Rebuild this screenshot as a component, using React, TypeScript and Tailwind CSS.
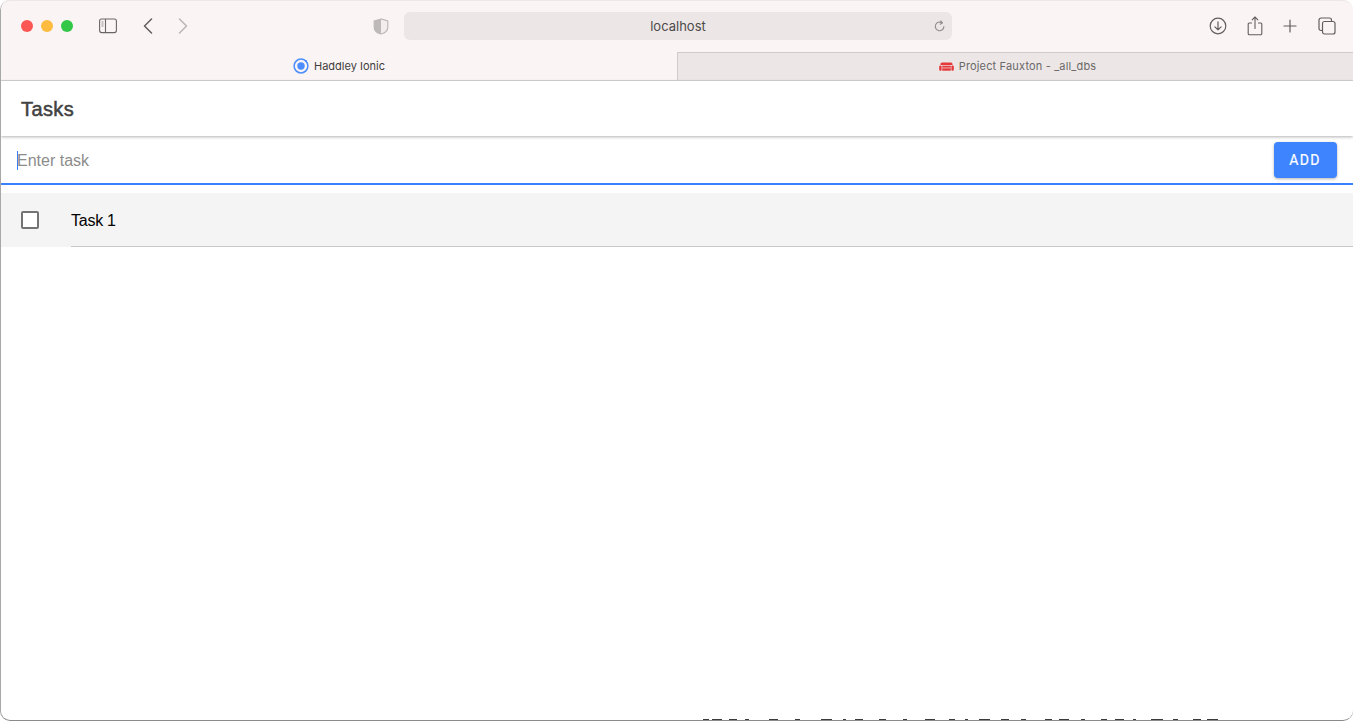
import React from 'react'

const SidebarIcon = () => (
  <svg width="18" height="16" viewBox="0 0 18 16" fill="none" className="text-[#6a6666]">
    <rect x="0.6" y="1" width="16.8" height="13.6" rx="2" stroke="currentColor" strokeWidth="1.1" />
    <path d="M6.5 1v13.6" stroke="currentColor" strokeWidth="1.1" />
    <path d="M2.5 4h2M2.5 6h2M2.500 8h2" stroke="currentColor" strokeWidth="1" opacity="0.7" />
  </svg>
)

const Chevron = ({ dir, color }: { dir: 'left' | 'right'; color: string }) => (
  <svg width="10" height="16" viewBox="0 0 10 16" fill="none" style={{ color }}>
    <path d={dir === 'left' ? 'M8.5 1 1.5 8l7 7' : 'M1.5 1l7 7-7 7'} stroke="currentColor" strokeWidth="1.5" strokeLinecap="round" strokeLinejoin="round" />
  </svg>
)

const Shield = () => (
  <svg width="16" height="17" viewBox="0 0 16 17" fill="none">
    <path d="M8 1 1.2 3v6c0 3.5 3 6 6.8 7 3.800-1 6.800-3.500 6.800-7V3L8 1z" fill="#f3eeed" stroke="#bdb9b9" strokeWidth="1.2" />
    <path d="M8 1 1.200 3v6c0 3.500 3 6 6.800 7V1z" fill="#bdb9b9" />
  </svg>
)

const Reload = () => (
  <svg width="12" height="13" viewBox="0 0 12 13" fill="none">
    <path d="M9.900 6.500a4.300 4.300 0 1 1-2-3.700" stroke="#918d8d" strokeWidth="1.100" strokeLinecap="round" />
    <path d="M6.700 0.800 8.500 2.800 6.300 4.200" stroke="#918d8d" strokeWidth="1.100" strokeLinecap="round" strokeLinejoin="round" />
  </svg>
)

const DownloadIcon = () => (
  <svg width="18" height="18" viewBox="0 0 18 18" fill="none">
    <circle cx="9" cy="9" r="7.800" stroke="#625e5e" strokeWidth="1.200" />
    <path d="M9 4.800v8M5.900 9.800 9 12.900l3.100-3.100" stroke="#625e5e" strokeWidth="1.200" strokeLinecap="round" strokeLinejoin="round" />
  </svg>
)

const ShareIcon = () => (
  <svg width="16" height="20" viewBox="0 0 16 20" fill="none">
    <path d="M5 7H2.200a1 1 0 0 0-1 1v9.800a1 1 0 0 0 1 1h11.600a1 1 0 0 0 1-1V8a1 1 0 0 0-1-1H11" stroke="#625e5e" strokeWidth="1.100" />
    <path d="M8 12.500V1.200M5.200 3.800 8 1l2.800 2.800" stroke="#625e5e" strokeWidth="1.100" strokeLinecap="round" strokeLinejoin="round" />
  </svg>
)

const PlusIcon = () => (
  <svg width="14" height="14" viewBox="0 0 14 14" fill="none">
    <path d="M7 1v12M1 7h12" stroke="#625e5e" strokeWidth="1.200" strokeLinecap="round" />
  </svg>
)

const TabsIcon = () => (
  <svg width="18" height="18" viewBox="0 0 18 18" fill="none">
    <path d="M4.500 13.500H3a2 2 0 0 1-2-2V3a2 2 0 0 1 2-2h8.500a2 2 0 0 1 2 2v1.500" stroke="#625e5e" strokeWidth="1.200" />
    <rect x="4.500" y="4.500" width="12.500" height="12.500" rx="2" stroke="#625e5e" strokeWidth="1.200" />
  </svg>
)

const IonicLogo = () => (
  <svg width="16" height="16" viewBox="0 0 16 16" fill="none">
    <circle cx="8" cy="8" r="6.900" stroke="#4c8dff" strokeWidth="1.500" />
    <circle cx="8" cy="8" r="3.700" fill="#4c8dff" />
    <circle cx="13" cy="3" r="1.100" fill="#4c8dff" />
  </svg>
)

const CouchLogo = () => (
  <svg width="15" height="10" viewBox="0 0 15 10" fill="none">
    <path d="M3 0.500h9a1.500 1.500 0 0 1 1.500 1.500v1H1.500V2A1.500 1.500 0 0 1 3 0.500z" fill="#e5383b" />
    <rect x="3.200" y="3.700" width="8.600" height="1.900" fill="#e5383b" />
    <rect x="3.200" y="6.300" width="8.600" height="2.400" fill="#e5383b" />
    <rect x="0.200" y="3.500" width="2.400" height="5.200" rx="1" fill="#e5383b" />
    <rect x="12.400" y="3.500" width="2.400" height="5.200" rx="1" fill="#e5383b" />
  </svg>
)

const BrowserChrome = () => (
  <div className="shrink-0 bg-[#faf5f4]">
    <div className="flex h-[52px] items-center pl-5 pr-[17px]">
      <div className="flex shrink-0 gap-2">
        <span className="h-3 w-3 rounded-full bg-[#fc5753]" />
        <span className="h-3 w-3 rounded-full bg-[#fdbc40]" />
        <span className="h-3 w-3 rounded-full bg-[#33c748]" />
      </div>
      <div className="ml-[26px] flex shrink-0"><SidebarIcon /></div>
      <div className="ml-[26px] flex shrink-0"><Chevron dir="left" color="#625e5e" /></div>
      <div className="ml-[25px] flex shrink-0"><Chevron dir="right" color="#bab6b6" /></div>
      <div className="ml-[185px] flex shrink-0"><Shield /></div>
      <div className="ml-[15px] flex h-7 w-[548px] shrink-0 items-center rounded-md bg-[#ece7e6] pr-[6px]">
        <span className="flex-1 pl-[18px] pt-px text-center font-['Inter',sans-serif] text-[13px] text-[#4d4a4a]">localhost</span>
        <Reload />
      </div>
      <div className="ml-auto flex shrink-0"><DownloadIcon /></div>
      <div className="ml-[20px] flex shrink-0"><ShareIcon /></div>
      <div className="ml-[20px] flex shrink-0"><PlusIcon /></div>
      <div className="ml-[21px] flex shrink-0"><TabsIcon /></div>
    </div>
    <div className="flex h-[29px] border-b border-[#d6d3d3] font-['Inter',sans-serif] text-[11px]">
      <div className="flex w-[676px] items-center justify-center gap-[5px] text-[#3f3d3d]">
        <IonicLogo />
        <span>Haddley Ionic</span>
      </div>
      <div className="flex flex-1 items-center justify-center gap-[5px] border-l border-t border-[#cfcbcb] bg-[#ece7e6] pl-1 text-[#6b6868]">
        <CouchLogo />
        <span className="tracking-[0.16px]">Project Fauxton - _all_dbs</span>
      </div>
    </div>
  </div>
)

const specks = [
  [0, 6], [9, 10], [26, 8], [42, 4], [66, 9], [92, 5], [118, 11], [140, 3], [152, 8], [176, 7],
  [200, 4], [222, 10], [246, 6], [262, 3], [276, 11], [298, 8], [318, 5], [342, 7], [356, 10],
  [378, 4], [398, 6], [412, 9], [430, 3], [448, 12], [470, 5], [490, 8], [504, 11],
]

export default function App() {
  return (
    <div className="relative h-[721px] w-[1353px] overflow-hidden bg-white">
      <div className="relative flex h-full flex-col overflow-hidden rounded-[10px] border-b border-l border-b-[#8a8a8a] border-l-[#a8a8a8] bg-white">
        <BrowserChrome />

        <header className="flex h-[55px] shrink-0 items-center pl-5 font-['Liberation_Sans',sans-serif] text-[20px] tracking-[0.4px] text-[#424242] [-webkit-text-stroke:0.5px_#424242] shadow-[0_1px_3px_rgba(0,0,0,0.3)]">
          Tasks
        </header>

        <div className="flex h-[49px] shrink-0 items-center border-b-2 border-[#3880ff] pl-4 pr-[16px]">
          <div className="flex flex-1 items-center pt-[2px] font-['Liberation_Sans',sans-serif] text-base text-[#8c8c8c]">
            <span className="-mr-px h-[19px] w-px bg-[#3880ff]" />
            Enter task
          </div>
          <button className="mt-px h-9 w-[63px] rounded bg-[#3e84ff] pr-px font-['Roboto',sans-serif] text-sm tracking-[1.3px] text-white [-webkit-text-stroke:0.2px_#fff] shadow-[0_1px_3px_rgba(0,0,0,0.3)]">
            ADD
          </button>
        </div>

        <div className="mt-2 flex h-[54px] shrink-0 bg-[#f4f4f4] pl-5 font-['Liberation_Sans',sans-serif] text-base text-black">
          <div className="mr-[32px] flex items-center">
            <span className="h-[18px] w-[18px] rounded-[2px] border-2 border-[#737373] bg-white" />
          </div>
          <div className="flex flex-1 items-center border-b border-[#c8c7cc] pt-[2px] tracking-[-0.25px]">Task 1</div>
        </div>

        <div className="absolute bottom-0 left-[702px] flex h-px w-[516px]">
          {specks.map(([x, w]) => (
            <span key={x} className="absolute top-0 h-px bg-[#3a3a3a]" style={{ left: x, width: w }} />
          ))}
        </div>
      </div>
      <div className="pointer-events-none absolute inset-0 rounded-[10px] border-t border-[#ece8e8]" />
    </div>
  )
}
